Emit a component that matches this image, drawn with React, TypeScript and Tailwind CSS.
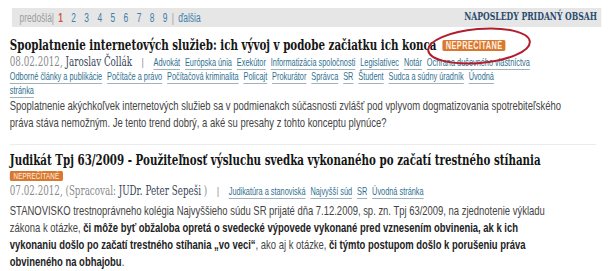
import React from "react";

const Tag = ({ children, last }: { children: React.ReactNode; last?: boolean }) => (
  <span className={`text-[#2f6f8f] underline decoration-[#9fb3bd] underline-offset-[3px] ${last ? "" : "mr-[7px]"}`}>
    {children}
  </span>
);

const Badge = ({ className = "" }: { className?: string }) => (
  <span
    className={`flex items-center justify-center rounded-[2px] bg-[#d8792f] text-[#fff1e6] font-['Liberation_Sans',Arial,sans-serif] leading-none ${className}`}
  >
    NEPREČÍTANÉ
  </span>
);

export default function App() {
  const serif = "font-['DejaVu_Serif',Georgia,serif]";
  const sans = "font-['Liberation_Sans',Arial,sans-serif]";
  return (
    <div className="relative w-[609px] h-[271px] overflow-hidden bg-white">
      <div className="w-[870px] origin-top-left scale-x-[0.7] pl-[14px] pt-[8px]">
        {/* pager bar */}
        <div className={`ml-[3px] w-[842px] h-[19px] bg-[#e6e6e6] flex items-center justify-between pl-[11px] pr-[6px] ${sans} text-[12px]`}>
          <div className="flex items-center">
            <span className="text-[#9c9c9c]">predošlá|</span>
            <span className="ml-[6px] font-bold text-[#cf5a37]">1</span>
            {["2", "3", "4", "5", "6", "7", "8", "9"].map((n) => (
              <span key={n} className="ml-[12px] text-[#3d80a8]">{n}</span>
            ))}
            <span className="ml-[6px] text-[#9c9c9c]">|</span>
            <span className="ml-[6px] text-[#3d80a8]">ďalšia</span>
          </div>
          <span className={`${serif} font-bold text-[11px] text-[#2a4c6e]`}>NAPOSLEDY PRIDANÝ OBSAH</span>
        </div>

        {/* article 1 */}
        <div className={`mt-[8px] h-[20px] flex items-center ${serif} font-bold text-[14.7px] text-[#151515]`}>
          <span className="leading-[20px]">Spoplatnenie internetových služieb: ich vývoj v podobe začiatku ich konca</span>
          <Badge className="ml-[9px] w-[90px] h-[11px] text-[10.5px] tracking-[0.6px]" />
        </div>
        <div className={`leading-[14px] ${sans} text-[10.5px]`}>
          <span className={`${serif} leading-[12px] text-[12.5px] text-[#8a8a8a]`}>08.02.2012, </span>
          <span className={`${serif} leading-[12px] text-[12.5px] text-[#3a4658]`}>Jaroslav Čollák</span>
          <span className="text-[#777] mx-[14px]">|</span>
          <Tag>Advokát</Tag>
          <Tag>Európska únia</Tag>
          <Tag>Exekútor</Tag>
          <Tag>Informatizácia spoločnosti</Tag>
          <Tag>Legislatívec</Tag>
          <Tag>Notár</Tag>
          <Tag last>Ochrana duševného vlastníctva</Tag>
          <br />
          <Tag>Odborné články a publikácie</Tag>
          <Tag>Počítače a právo</Tag>
          <Tag>Počítačová kriminalita</Tag>
          <Tag>Policajt</Tag>
          <Tag>Prokurátor</Tag>
          <Tag>Správca</Tag>
          <Tag>SR</Tag>
          <Tag>Študent</Tag>
          <Tag>Sudca a súdny úradník</Tag>
          <Tag last>
            Úvodná
            <br />
            stránka
          </Tag>
        </div>
        <p className={`leading-[17px] ${sans} text-[13.5px] text-[#444]`}>
          Spoplatnenie akýchkoľvek internetových služieb sa v podmienakch súčasnosti zvlášť pod vplyvom dogmatizovania spotrebiteľského
          <br />
          práva stáva nemožným. Je tento trend dobrý, a aké su presahy z tohto konceptu plynúce?
        </p>

        <div className="mt-[13px] w-[838px] border-t border-[#ececec]" />

        {/* article 2 */}
        <div className={`mt-[5px] leading-[20px] ${serif} font-bold text-[14.7px] text-[#151515]`}>
          Judikát Tpj 63/2009 - Použiteľnosť výsluchu svedka vykonaného po začatí trestného stíhania
        </div>
        <div className="mt-[1px] flex">
          <Badge className="w-[76px] h-[10px] text-[9px] tracking-[0.2px]" />
        </div>
        <div className={`mt-[3px] leading-[14px] ${sans} text-[10.5px]`}>
          <span className={`${serif} leading-[12px] text-[12.5px] text-[#8a8a8a]`}>07.02.2012, (Spracoval: </span>
          <span className={`${serif} leading-[12px] text-[12.5px] text-[#3a4658]`}>JUDr. Peter Sepeši</span>
          <span className={`${serif} leading-[12px] text-[12.5px] text-[#8a8a8a]`}> )</span>
          <span className="text-[#777] mx-[14px]">|</span>
          <Tag>Judikatúra a stanoviská</Tag>
          <Tag>Najvyšší súd</Tag>
          <Tag>SR</Tag>
          <Tag last>Úvodná stránka</Tag>
        </div>
        <p className={`mt-[4px] leading-[17px] ${sans} text-[13.5px] text-[#444]`}>
          STANOVISKO trestnoprávneho kolégia Najvyššieho súdu SR prijaté dňa 7.12.2009, sp. zn. Tpj 63/2009, na zjednotenie výkladu
          <br />
          zákona k otázke, <b className="text-[#222]">či môže byť obžaloba opretá o svedecké výpovede vykonané pred vznesením obvinenia, ak k ich</b>
          <br />
          <b className="text-[#222]">vykonaniu došlo po začatí trestného stíhania „vo veci“</b>, ako aj k otázke, <b className="text-[#222]">či týmto postupom došlo k porušeniu práva</b>
          <br />
          <b className="text-[#222]">obvineného na obhajobu</b>.
        </p>
      </div>

      {/* red hand-drawn ellipse annotation */}
      <svg className="pointer-events-none absolute left-0 top-0" width="609" height="271" viewBox="0 0 609 271">
        <ellipse cx="479" cy="46" rx="51" ry="17" transform="rotate(-5 479 46)" fill="none" stroke="#b21e2c" strokeWidth="2" />
      </svg>
    </div>
  );
}
